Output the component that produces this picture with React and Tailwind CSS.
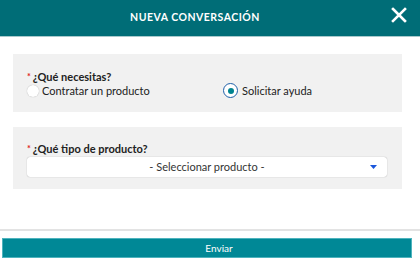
import React from "react";

export default function App() {
  return (
    <div className="w-[420px] h-[261px] bg-white relative overflow-hidden" style={{ fontFamily: "Lato, 'Open Sans', sans-serif" }}>
      <div className="h-[37px] bg-[#006d77] border-b border-[#a9c9cc] flex items-center justify-center relative">
        <span className="text-white text-[10.5px] font-bold tracking-[0.5px] ml-[-30px]">NUEVA CONVERSACIÓN</span>
        <svg className="absolute right-[13px] top-[7px]" width="16" height="16" viewBox="0 0 16 16">
          <path d="M2 2 L14 14 M14 2 L2 14" stroke="white" strokeWidth="2.6" strokeLinecap="square" />
        </svg>
      </div>

      <div className="mt-[17px] ml-[13px] w-[389px] h-[58px] bg-[#f1f1f1] pl-[14px] pt-[15px]">
        <div className="text-[11px] font-bold text-[#222] leading-[15px]">
          <span className="text-[#e02020] text-[9px] align-top mr-[2px]">*</span>¿Qué necesitas?
        </div>
        <div className="flex items-center mt-[-1px] text-[11px] text-[#222] leading-[15px]">
          <div className="flex items-center w-[195px]">
            <span className="w-[12px] h-[12px] rounded-full bg-white shadow-[0_0_1px_rgba(0,0,0,0.35)] mr-[3px]"></span>
            <span>Contratar un producto</span>
          </div>
          <div className="flex items-center ml-[1px]">
            <span className="w-[15px] h-[15px] rounded-full border-[1.5px] border-[#1e5fa8] bg-white flex items-center justify-center mr-[4px]">
              <span className="w-[6px] h-[6px] rounded-full bg-[#00838f]"></span>
            </span>
            <span>Solicitar ayuda</span>
          </div>
        </div>
      </div>

      <div className="mt-[15px] ml-[13px] w-[389px] h-[62px] bg-[#f1f1f1] pl-[14px] pt-[14px]">
        <div className="text-[11px] font-bold text-[#222] leading-[15px]">
          <span className="text-[#e02020] text-[9px] align-top mr-[2px]">*</span>¿Qué tipo de producto?
        </div>
        <div className="mt-[1px] w-[360px] h-[20px] bg-white rounded-[3px] shadow-[0_0_1px_rgba(0,0,0,0.4)] flex items-center justify-center relative text-[11px] text-[#333]">
          <span>- Seleccionar producto -</span>
          <svg className="absolute right-[10px] top-[8px]" width="7" height="4" viewBox="0 0 7 4">
            <path d="M0 0 L7 0 L3.5 4 Z" fill="#1a56db" />
          </svg>
        </div>
      </div>

      <div className="mt-[40px] h-[2px] bg-[#e3e3e3]"></div>
      <div className="mt-[7px] ml-[2px] w-[410px] h-[20px] bg-[#008896] border border-[#4db3bd] flex items-center justify-center pl-[24px] text-white text-[10px]">
        Enviar
      </div>
    </div>
  );
}
